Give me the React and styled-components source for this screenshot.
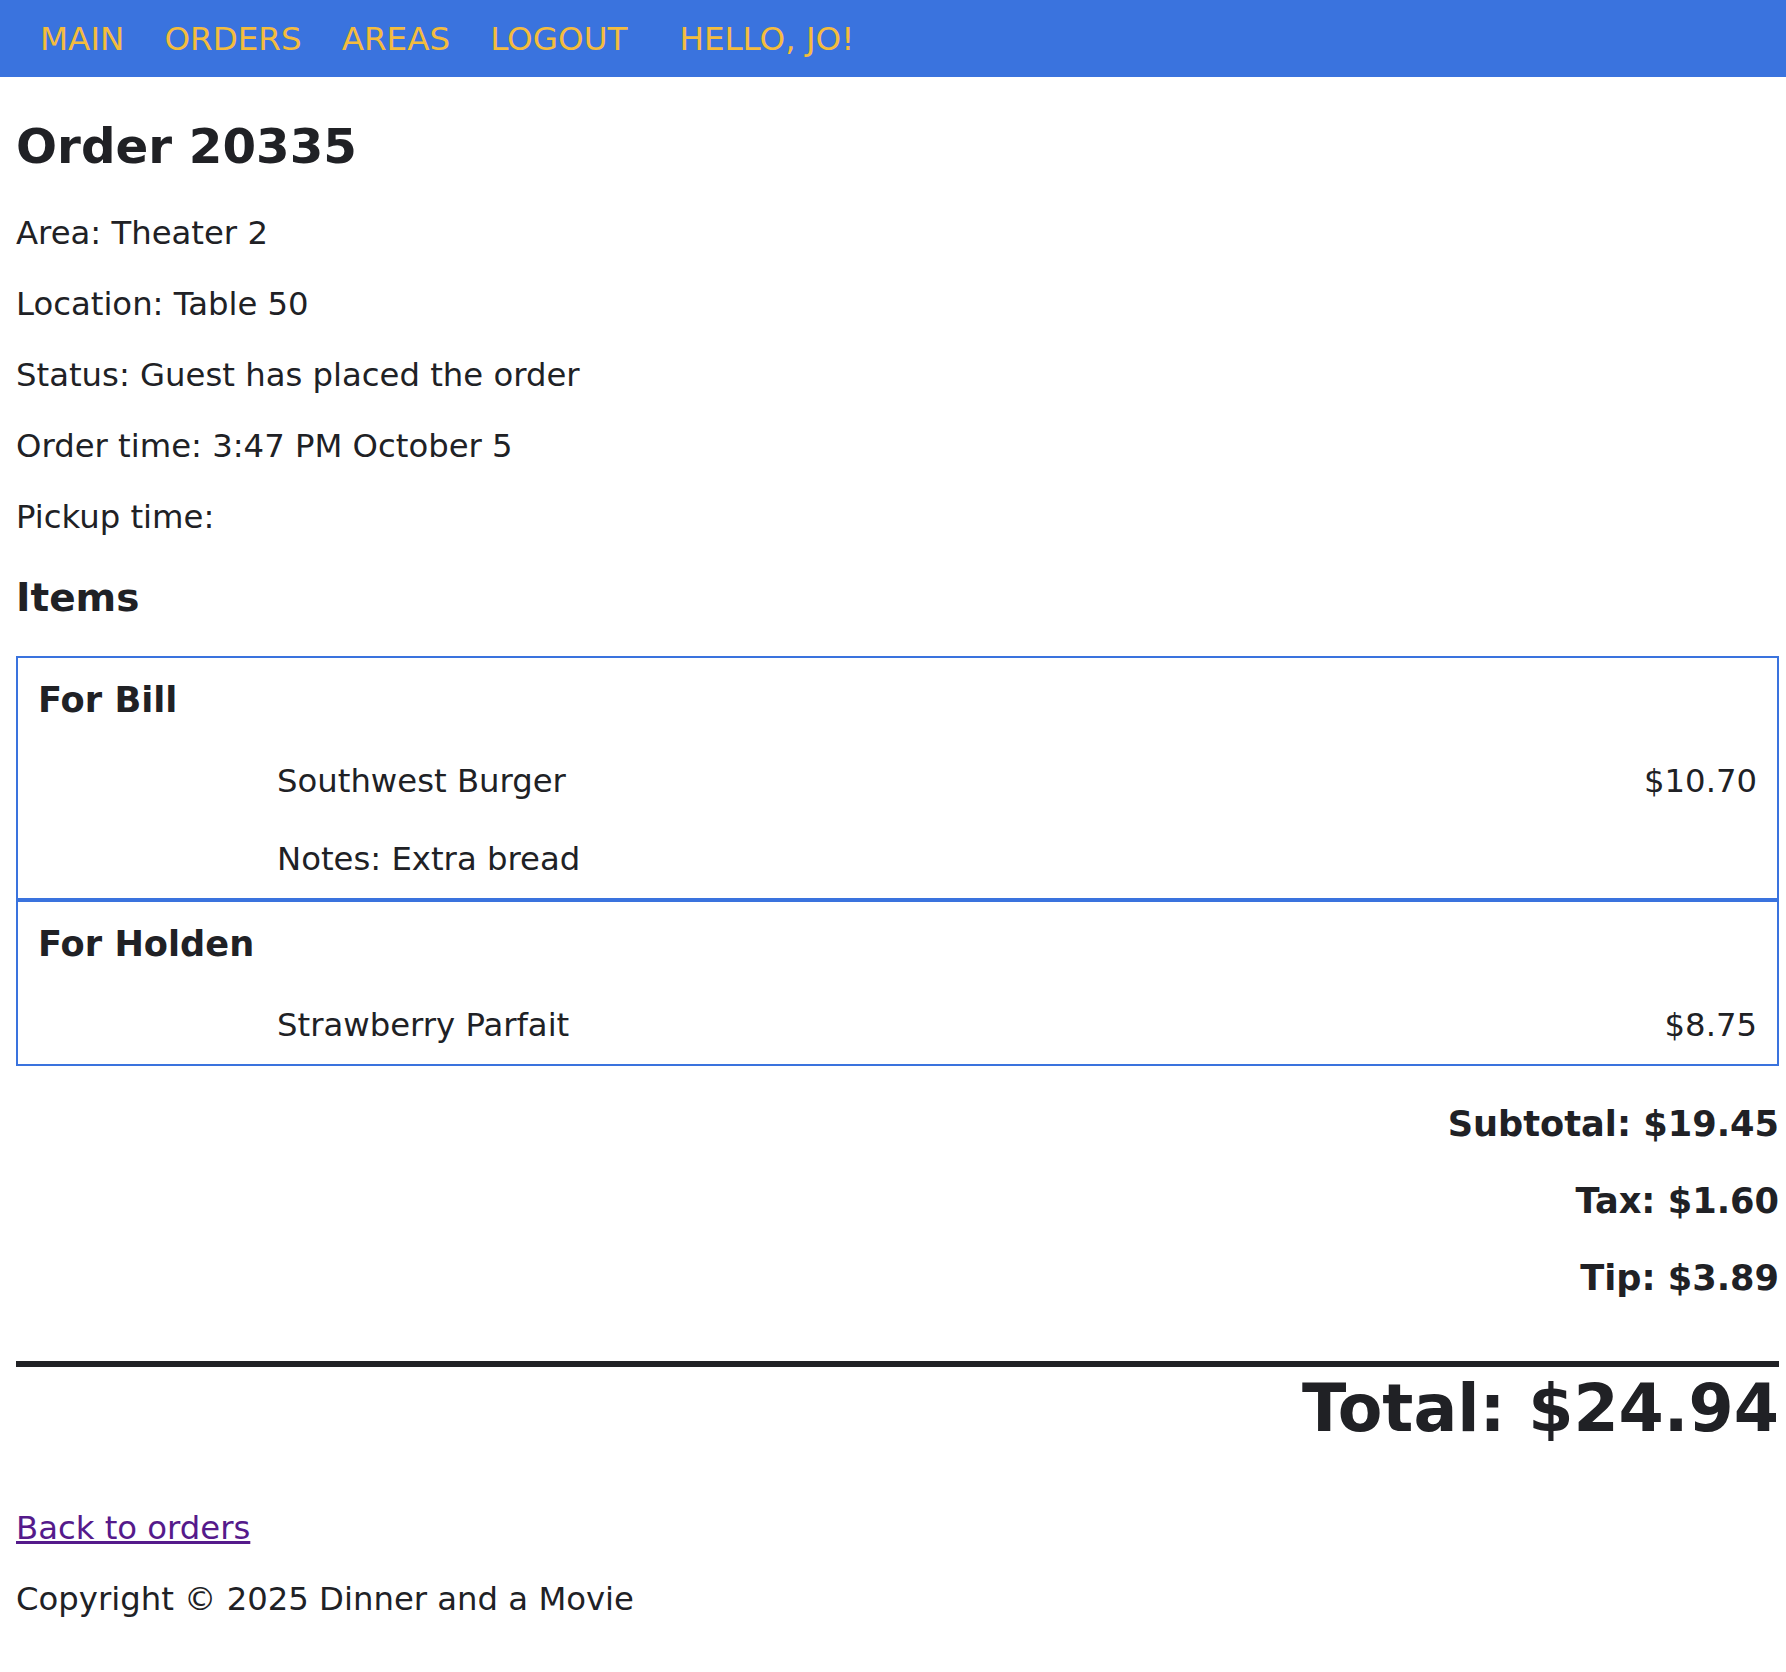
import React from "react";
import styled, { createGlobalStyle } from "styled-components";

const GlobalStyle = createGlobalStyle`
  body {
    margin: 0;
    background: #fff;
    color: #202125;
    font-family: "DejaVu Sans", Verdana, sans-serif;
    font-size: 32.3px;
  }
`;

const NavBar = styled.nav`
  display: flex;
  align-items: center;
  height: 77px;
  padding-left: 20px;
  background-color: #3a73de;
`;

const NavLink = styled.a`
  padding: 0 20px;
  margin-left: ${(p) => (p.$greeting ? "12px" : "0")};
  color: #f4bc3d;
  font-size: 32.6px;
  line-height: 38px;
  text-decoration: none;
  text-transform: uppercase;
`;

const Main = styled.main`
  padding: 0 7px 0 16px;
`;

const Title = styled.h1`
  margin: 41px 0 40px;
  font-size: 48.3px;
  line-height: 56px;
  font-weight: bold;
`;

const Detail = styled.p`
  margin: 33px 0;
  line-height: 38px;
`;

const SectionTitle = styled.h3`
  margin: 40px 0 36px;
  font-size: 39px;
  line-height: 44px;
`;

const Group = styled.section`
  border: 2px solid #3a73de;
  padding: 20px;
`;

const GroupTitle = styled.h3`
  margin: 0;
  font-size: 35.2px;
  line-height: 44px;
`;

const ItemRow = styled.div`
  display: flex;
  justify-content: space-between;
  margin-top: 40px;
  padding-left: 239px;
  line-height: 38px;
`;

const Price = styled.span`
  text-align: right;
`;

const Summary = styled.div`
  margin-top: 37px;
  text-align: right;
`;

const SummaryLine = styled.h4`
  margin: 0 0 36px;
  font-size: 35.2px;
  line-height: 41px;
  &:last-of-type {
    margin-bottom: 0;
  }
`;

const Rule = styled.hr`
  margin: 63px 0 4px;
  height: 6px;
  border: none;
  background-color: #202125;
`;

const Total = styled.h2`
  margin: 0;
  font-size: 65px;
  line-height: 75px;
  text-align: right;
`;

const BackLink = styled.a`
  color: #551a8b;
  text-decoration: underline;
`;

const Footer = styled.p`
  margin: ${(p) => (p.$first ? "63px" : "33px")} 0 33px;
  line-height: 38px;
`;

const groups = [
  {
    guest: "Bill",
    items: [{ name: "Southwest Burger", price: "$10.70", notes: "Extra bread" }],
  },
  {
    guest: "Holden",
    items: [{ name: "Strawberry Parfait", price: "$8.75" }],
  },
];

export default function App() {
  return (
    <>
      <GlobalStyle />
      <NavBar>
        <NavLink href="#">Main</NavLink>
        <NavLink href="#">Orders</NavLink>
        <NavLink href="#">Areas</NavLink>
        <NavLink href="#">Logout</NavLink>
        <NavLink $greeting href="#">
          Hello, Jo!
        </NavLink>
      </NavBar>
      <Main>
        <Title>Order 20335</Title>
        <Detail>Area: Theater 2</Detail>
        <Detail>Location: Table 50</Detail>
        <Detail>Status: Guest has placed the order</Detail>
        <Detail>Order time: 3:47 PM October 5</Detail>
        <Detail>Pickup time: </Detail>
        <SectionTitle>Items</SectionTitle>
        {groups.map((g) => (
          <Group key={g.guest}>
            <GroupTitle>For {g.guest}</GroupTitle>
            {g.items.map((item) => (
              <React.Fragment key={item.name}>
                <ItemRow>
                  <span>{item.name}</span>
                  <Price>{item.price}</Price>
                </ItemRow>
                {item.notes && (
                  <ItemRow>
                    <span>Notes: {item.notes}</span>
                  </ItemRow>
                )}
              </React.Fragment>
            ))}
          </Group>
        ))}
        <Summary>
          <SummaryLine>Subtotal: $19.45</SummaryLine>
          <SummaryLine>Tax: $1.60</SummaryLine>
          <SummaryLine>Tip: $3.89</SummaryLine>
        </Summary>
        <Rule />
        <Total>Total: $24.94</Total>
        <Footer $first>
          <BackLink href="#">Back to orders</BackLink>
        </Footer>
        <Footer>Copyright © 2025 Dinner and a Movie</Footer>
      </Main>
    </>
  );
}
